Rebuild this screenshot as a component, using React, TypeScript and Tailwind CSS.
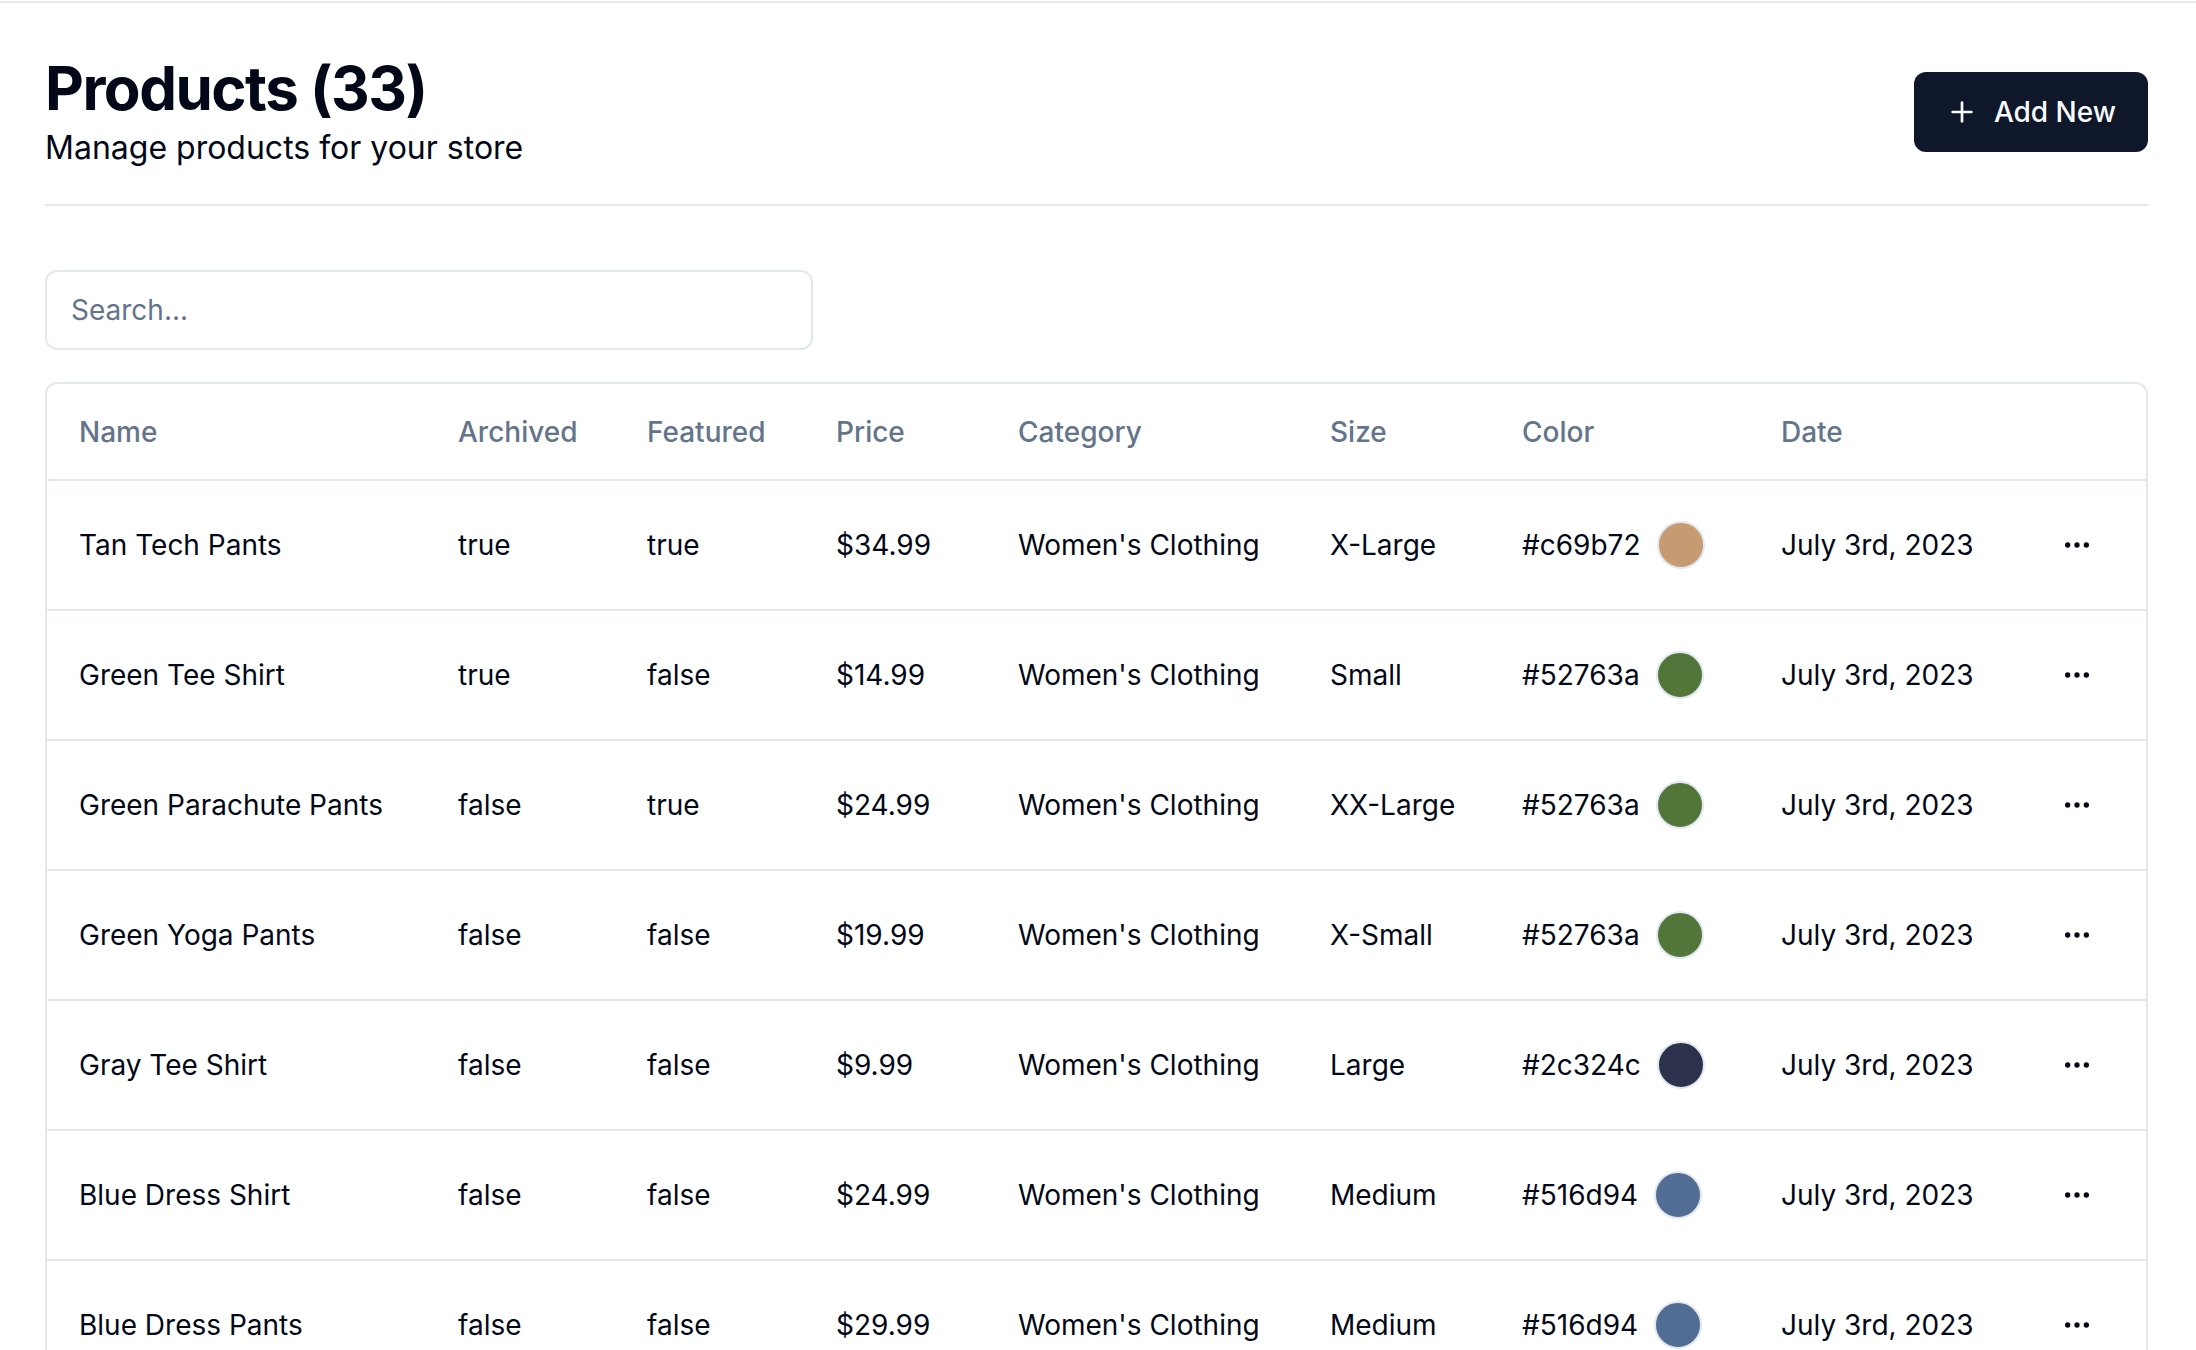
import React from "react";

type Row = {
  name: string;
  archived: string;
  featured: string;
  price: string;
  category: string;
  size: string;
  color: string;
  date: string;
};

const rows: Row[] = [
  { name: "Tan Tech Pants", archived: "true", featured: "true", price: "$34.99", category: "Women's Clothing", size: "X-Large", color: "#c69b72", date: "July 3rd, 2023" },
  { name: "Green Tee Shirt", archived: "true", featured: "false", price: "$14.99", category: "Women's Clothing", size: "Small", color: "#52763a", date: "July 3rd, 2023" },
  { name: "Green Parachute Pants", archived: "false", featured: "true", price: "$24.99", category: "Women's Clothing", size: "XX-Large", color: "#52763a", date: "July 3rd, 2023" },
  { name: "Green Yoga Pants", archived: "false", featured: "false", price: "$19.99", category: "Women's Clothing", size: "X-Small", color: "#52763a", date: "July 3rd, 2023" },
  { name: "Gray Tee Shirt", archived: "false", featured: "false", price: "$9.99", category: "Women's Clothing", size: "Large", color: "#2c324c", date: "July 3rd, 2023" },
  { name: "Blue Dress Shirt", archived: "false", featured: "false", price: "$24.99", category: "Women's Clothing", size: "Medium", color: "#516d94", date: "July 3rd, 2023" },
  { name: "Blue Dress Pants", archived: "false", featured: "false", price: "$29.99", category: "Women's Clothing", size: "Medium", color: "#516d94", date: "July 3rd, 2023" },
];

function PlusIcon() {
  return (
    <svg width="32" height="32" viewBox="0 0 24 24" fill="none" stroke="currentColor" strokeWidth="2" strokeLinecap="round" strokeLinejoin="round" className="mr-4">
      <path d="M5 12h14" />
      <path d="M12 5v14" />
    </svg>
  );
}

function DotsIcon() {
  return (
    <svg width="32" height="32" viewBox="0 0 24 24" fill="none" stroke="currentColor" strokeWidth="2" strokeLinecap="round" strokeLinejoin="round">
      <circle cx="12" cy="12" r="1" />
      <circle cx="19" cy="12" r="1" />
      <circle cx="5" cy="12" r="1" />
    </svg>
  );
}

export default function App() {
  return (
    <div
      className="h-[1350px] overflow-hidden bg-white text-[#020817]"
      style={{ fontFamily: "Inter, 'Noto Sans', sans-serif" }}
    >
      <div className="h-[3px] border-b-2 border-[#e2e8f0]" />
      <div className="pl-[45px] pr-[48px] pt-[49px]">
        <div className="flex h-[120px] items-center justify-between">
          <div>
            <h2 className="text-[60px] font-bold leading-[72px] tracking-tight">Products (33)</h2>
            <p className="text-[32px] leading-[48px]">Manage products for your store</p>
          </div>
          <button className="flex h-[80px] items-center rounded-[12px] bg-[#0f172a] px-[32px] text-[28px] font-medium text-[#f8fafc]">
            <PlusIcon />
            Add New
          </button>
        </div>
        <div className="mt-[32px] h-[2px] w-full bg-[#e2e8f0]" />
        <div className="mt-[32px] flex items-center py-[32px]">
          <div className="flex h-[80px] w-[768px] items-center rounded-[12px] border-2 border-[#e2e8f0] px-[24px] text-[28px] text-[#64748b]">
            Search...
          </div>
        </div>
        <div className="overflow-hidden rounded-[12px] border-2 border-[#e2e8f0]">
          <table className="w-full table-fixed text-[28px] leading-[40px]">
            <colgroup>
              <col className="w-[379px]" />
              <col className="w-[189px]" />
              <col className="w-[189px]" />
              <col className="w-[182px]" />
              <col className="w-[312px]" />
              <col className="w-[192px]" />
              <col className="w-[259px]" />
              <col className="w-[264px]" />
              <col />
            </colgroup>
            <thead>
              <tr className="border-b-2 border-[#e2e8f0]">
                {["Name", "Archived", "Featured", "Price", "Category", "Size", "Color", "Date", ""].map((h, i) => (
                  <th key={i} className="h-[96px] px-[32px] text-left align-middle font-medium text-[#64748b]">
                    {h}
                  </th>
                ))}
              </tr>
            </thead>
            <tbody>
              {rows.map((r, i) => (
                <tr key={i} className="border-b-2 border-[#e2e8f0]">
                  <td className="whitespace-nowrap p-[32px] align-middle">{r.name}</td>
                  <td className="p-[32px] align-middle">{r.archived}</td>
                  <td className="p-[32px] align-middle">{r.featured}</td>
                  <td className="p-[32px] align-middle">{r.price}</td>
                  <td className="whitespace-nowrap p-[32px] align-middle">{r.category}</td>
                  <td className="p-[32px] align-middle">{r.size}</td>
                  <td className="p-[32px] align-middle">
                    <div className="flex items-center gap-x-[16px]">
                      {r.color}
                      <div
                        className="h-[48px] w-[48px] shrink-0 rounded-full border-2 border-[#e2e8f0]"
                        style={{ backgroundColor: r.color }}
                      />
                    </div>
                  </td>
                  <td className="whitespace-nowrap p-[32px] align-middle">{r.date}</td>
                  <td className="p-[32px] align-middle">
                    <button className="flex h-[64px] w-[64px] items-center justify-center rounded-[12px] text-[#020817]">
                      <DotsIcon />
                    </button>
                  </td>
                </tr>
              ))}
            </tbody>
          </table>
        </div>
      </div>
    </div>
  );
}
